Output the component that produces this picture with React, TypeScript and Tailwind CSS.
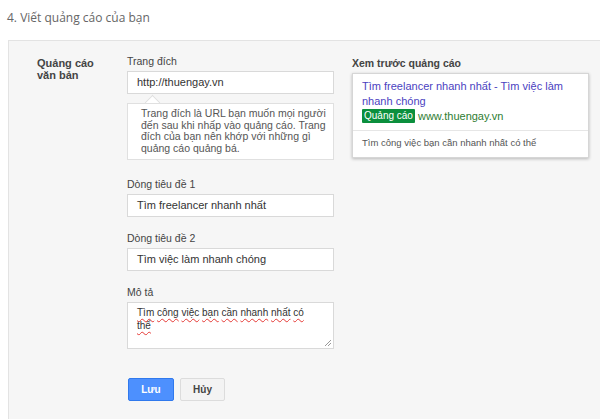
import type { ReactNode } from "react";

const arial = { fontFamily: '"Liberation Sans", Arial, sans-serif' };

export default function App() {
  return (
    <div className="h-[419px] w-[600px] overflow-hidden bg-white" style={arial}>
      <h2
        className="pl-[7px] pt-[9px] text-[12px] leading-[18px] text-[#666]"
        style={{ fontFamily: '"Open Sans", sans-serif' }}
      >
        4. Viết quảng cáo của bạn
      </h2>
      <div className="ml-[8px] mt-[13px] flex h-[400px] w-[620px] border border-[#e3e3e3] bg-[#f6f6f6] pt-[13px]">
        <div className="w-[118px] shrink-0 pl-[28px] text-[11px] font-bold leading-[12px] text-[#444]">
          <div className="pt-[3px]">Quảng cáo</div>
          <div>văn bản</div>
        </div>
        <div className="w-[207px] shrink-0">
          <Field label="Trang đích">
            <TextBox>http://thuengay.vn</TextBox>
          </Field>
          <Tip />
          <div className="mt-[17px] space-y-[14px]">
            <Field label="Dòng tiêu đề 1">
              <TextBox>Tìm freelancer nhanh nhất</TextBox>
            </Field>
            <Field label="Dòng tiêu đề 2">
              <TextBox>Tìm việc làm nhanh chóng</TextBox>
            </Field>
            <Field label="Mô tả">
              <Description />
            </Field>
          </div>
          <div className="mt-[29px] flex gap-[6px] pl-[1px]">
            <button className="h-[23px] w-[46px] rounded-[2px] border border-[#3079ed] bg-[#4d90fe] text-[10px] font-bold text-white">
              Lưu
            </button>
            <button className="h-[23px] w-[45px] rounded-[2px] border border-[#dcdcdc] bg-[#f3f3f3] text-[10px] font-bold text-[#444]">
              Hủy
            </button>
          </div>
        </div>
        <div className="ml-[18px] w-[237px] shrink-0">
          <div className="pt-[2px] text-[10.5px] font-bold leading-[15px] text-[#444]">Xem trước quảng cáo</div>
          <div className="mt-[2px] border border-[#d6d6d6] bg-white shadow-[0_1px_3px_rgba(0,0,0,0.25)]">
            <div className="px-[9px] pb-[7px] pt-[5px]">
              <div className="text-[11px] leading-[15px] text-[#4b3fbf]">
                Tìm freelancer nhanh nhất - Tìm việc làm nhanh chóng
              </div>
              <div className="flex items-center gap-[3px] leading-[14px]">
                <span className="rounded-[1px] bg-[#0b8f3d] px-[2px] text-[10px] text-white">Quảng cáo</span>
                <span className="text-[11px] text-[#2e7d32]">www.thuengay.vn</span>
              </div>
            </div>
            <div className="border-t border-[#e6e6e6] px-[9px] pb-[8px] pt-[5px] text-[9.5px] leading-[13px] text-[#555]">
              Tìm công việc bạn cần nhanh nhất có thể
            </div>
          </div>
        </div>
      </div>
    </div>
  );
}

function Field({ label, children }: { label: string; children: ReactNode }) {
  return (
    <div>
      <div className="mb-[2px] text-[10.5px] leading-[15px] text-[#444]">{label}</div>
      {children}
    </div>
  );
}

function TextBox({ children }: { children: ReactNode }) {
  return (
    <div className="flex h-[23px] items-center border border-[#d9d9d9] bg-white pl-[9px] text-[11px] text-[#333]">
      {children}
    </div>
  );
}

function Tip() {
  return (
    <div className="relative mt-[9px]">
      <div className="absolute left-[20px] top-[-6px] h-[11px] w-[11px] rotate-45 border-l border-t border-[#e0e0e0] bg-white" />
      <div className="relative h-[57px] whitespace-nowrap border border-[#e0e0e0] bg-white pl-[13px] pt-[4px] text-[10.5px] leading-[11.7px] text-[#555]">
        Trang đích là URL bạn muốn mọi người
        <br />
        đến sau khi nhấp vào quảng cáo. Trang
        <br />
        đích của bạn nên khớp với những gì
        <br />
        quảng cáo quảng bá.
      </div>
    </div>
  );
}

function Description() {
  const lines = [
    ["Tìm", "công", "việc", "bạn", "cần", "nhanh", "nhất", "có"],
    ["thể"],
  ];
  return (
    <div className="relative h-[47px] border border-[#d9d9d9] bg-white pl-[9px] pt-[4px] text-[10px] leading-[12.5px] text-[#333]">
      {lines.map((words, li) => (
        <div key={li} className="whitespace-nowrap">
          {words.map((w, i) => (
            <span key={i}>
              <span className="underline decoration-[#e53935] decoration-wavy decoration-1 underline-offset-2">{w}</span>
              {i < words.length - 1 ? " " : ""}
            </span>
          ))}
        </div>
      ))}
      <svg className="absolute bottom-[1px] right-[1px]" width="8" height="8" viewBox="0 0 8 8">
        <path d="M7 1 L1 7 M7 4 L4 7" stroke="#999" strokeWidth="1" />
      </svg>
    </div>
  );
}
